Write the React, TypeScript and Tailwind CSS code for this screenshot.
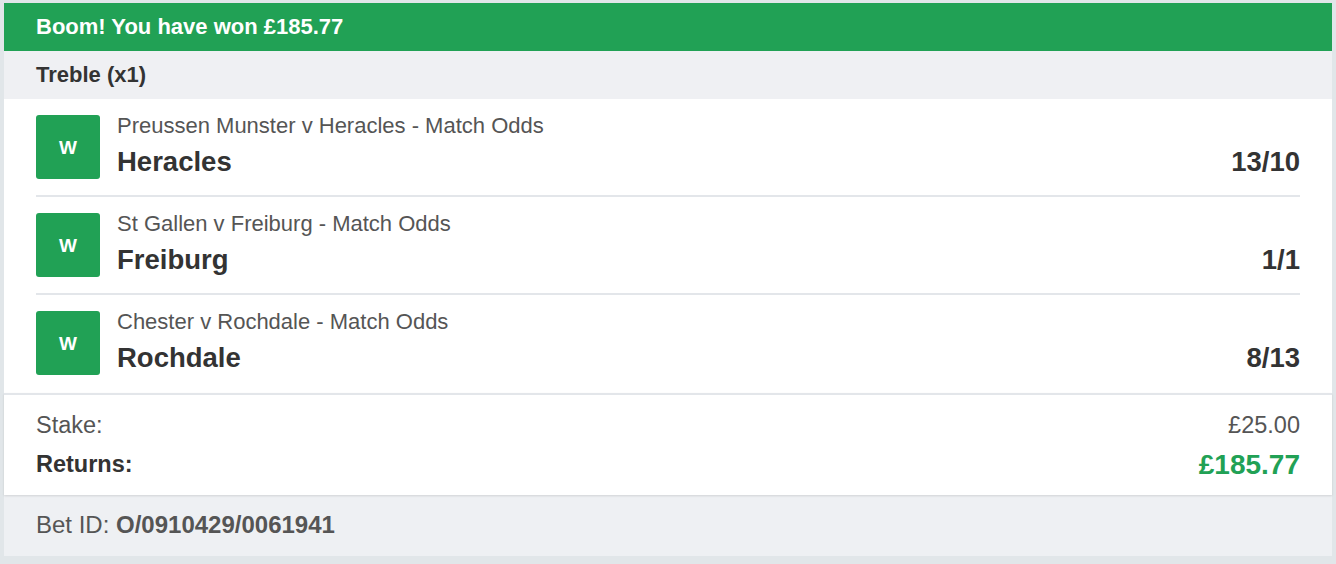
const legs = [
    { market: 'Preussen Munster v Heracles - Match Odds', pick: 'Heracles', odds: '13/10' },
    { market: 'St Gallen v Freiburg - Match Odds', pick: 'Freiburg', odds: '1/1' },
    { market: 'Chester v Rochdale - Match Odds', pick: 'Rochdale', odds: '8/13' },
];

const App = () => {
    return (
        <div
            className="min-h-screen bg-[#e1e6e9] px-[4px] pt-[3px]"
            style={{ fontFamily: '"Liberation Sans", Arial, sans-serif' }}
        >
            <div className="bg-white">
                {/* Win banner */}
                <div className="h-[48px] bg-[#21a155] px-8 flex items-center">
                    <h1 className="text-[22px] font-bold text-white leading-none">
                        Boom! You have won £185.77
                    </h1>
                </div>

                {/* Bet type */}
                <div className="h-[48px] bg-[#eff0f3] px-8 flex items-center">
                    <p className="text-[22px] font-bold text-[#333] leading-none">Treble (x1)</p>
                </div>

                {/* Selections */}
                <div className="px-8">
                    {legs.map((leg, i) => (
                        <div
                            key={leg.pick}
                            className={
                                i < legs.length - 1
                                    ? 'flex items-start gap-[17px] py-4 border-b-2 border-[#e3e6ea]'
                                    : 'flex items-start gap-[17px] pt-4 pb-[18px]'
                            }
                        >
                            <div className="w-[64px] h-[64px] shrink-0 rounded-[3px] bg-[#21a155] flex items-center justify-center">
                                <span className="text-[19px] font-bold text-white leading-none">W</span>
                            </div>
                            <div className="flex-1">
                                <p className="text-[22px] leading-[22px] text-[#555]">{leg.market}</p>
                                <div className="mt-[9px] flex justify-between items-center">
                                    <p className="text-[27.5px] leading-[32px] font-bold text-[#333]">{leg.pick}</p>
                                    <p className="text-[27.5px] leading-[32px] font-bold text-[#333]">{leg.odds}</p>
                                </div>
                            </div>
                        </div>
                    ))}
                </div>

                {/* Stake / returns */}
                <div className="border-t-2 border-[#e3e6ea] px-8 pt-[17px] pb-[13px] shadow-[0_1px_2px_rgba(0,0,0,0.12)] relative">
                    <div className="flex justify-between items-center h-[28px] text-[23.5px] text-[#555]">
                        <span>Stake:</span>
                        <span>£25.00</span>
                    </div>
                    <div className="mt-[8px] flex justify-between items-center h-[34px]">
                        <span className="text-[23.5px] font-bold text-[#333]">Returns:</span>
                        <span className="text-[28px] font-bold text-[#21a155]">£185.77</span>
                    </div>
                </div>

                {/* Footer */}
                <div className="bg-[#eef0f3] px-8 pt-[16px] pb-[17px]">
                    <p className="text-[24px] leading-[28px] text-[#555]">
                        Bet ID: <span className="font-bold">O/0910429/0061941</span>
                    </p>
                </div>
            </div>
        </div>
    );
};

export default App;
